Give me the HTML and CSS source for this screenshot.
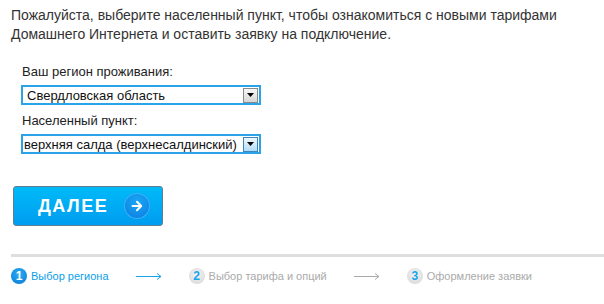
FILE: index.html
```html
<!DOCTYPE html>
<html lang="ru">
<head>
<meta charset="utf-8">
<link rel="stylesheet" href="styles.css">
</head>
<body>
<p class="intro">Пожалуйста, выберите населенный пункт, чтобы ознакомиться с новыми тарифами Домашнего Интернета и оставить заявку на подключение.</p>
<div class="form">
  <div class="label">Ваш регион проживания:</div>
  <div class="select">
    <span class="value">Свердловская область</span>
    <span class="arrow"><svg width="7" height="4" viewBox="0 0 7 4"><path d="M0 0h7L3.5 4z" fill="#000"/></svg></span>
  </div>
  <div class="label label2">Населенный пункт:</div>
  <div class="select select2">
    <span class="value">верхняя салда (верхнесалдинский)</span>
    <span class="arrow arrow-hot"><svg width="7" height="4" viewBox="0 0 7 4"><path d="M0 0h7L3.5 4z" fill="#000"/></svg></span>
  </div>
</div>
<button class="next" type="button">
  <span class="next-text">ДАЛЕЕ</span>
  <span class="next-icon"><svg width="14" height="14" viewBox="0 0 14 14"><path d="M2.5 7h8.5M7 2.8L11.2 7 7 11.2" fill="none" stroke="#fff" stroke-width="2" stroke-linecap="round" stroke-linejoin="round"/></svg></span>
</button>
<div class="rule"></div>
<div class="steps">
  <div class="step active"><span class="num">1</span><span class="stext">Выбор региона</span></div>
  <span class="sarrow active-arrow"><svg width="26" height="7" viewBox="0 0 26 7"><path d="M0 3.5h25M21 0.5l4 3-4 3" fill="none" stroke="currentColor" stroke-width="1"/></svg></span>
  <div class="step"><span class="num">2</span><span class="stext">Выбор тарифа и опций</span></div>
  <span class="sarrow"><svg width="26" height="7" viewBox="0 0 26 7"><path d="M0 3.5h25M21 0.5l4 3-4 3" fill="none" stroke="currentColor" stroke-width="1"/></svg></span>
  <div class="step"><span class="num">3</span><span class="stext">Оформление заявки</span></div>
</div>
</body>
</html>
```
FILE: styles.css
```css
html, body {
  margin: 0;
  padding: 0;
  background: #fff;
}
body {
  font-family: Arial, "Liberation Sans", sans-serif;
  color: #333;
  width: 604px;
  height: 304px;
  overflow: hidden;
}
.intro {
  margin: 6px 0 0 11px;
  font-size: 14px;
  line-height: 19px;
  width: 590px;
}
.form {
  margin: 20px 0 0 21px;
  width: 240px;
}
.label {
  font-size: 13px;
  line-height: 16px;
  color: #222;
  margin-bottom: 5px;
  padding-left: 1px;
}
.label2 {
  margin-top: 8px;
}
.select {
  box-sizing: border-box;
  height: 20px;
  border: 2px solid #2aa3e8;
  background: #fff;
  display: flex;
  align-items: center;
  justify-content: space-between;
  padding: 0 1px 0 4px;
}
.value {
  font-size: 13px;
  color: #111;
  white-space: nowrap;
}
.select2 .value {
  margin-left: -3px;
}
.arrow {
  box-sizing: border-box;
  width: 15px;
  height: 15px;
  border: 1px solid #8a8a8a;
  background: linear-gradient(#f7f7f7, #d6d6d6);
  display: flex;
  align-items: center;
  justify-content: center;
}
.arrow-hot {
  border-color: #3c86bd;
  background: linear-gradient(#eef8fe, #b2dcf6);
}
.next {
  margin: 32px 0 0 13px;
  width: 150px;
  height: 40px;
  box-sizing: border-box;
  border: 1px solid #5f7d92;
  border-radius: 3px;
  background: linear-gradient(#00baf8, #009cf0);
  display: flex;
  align-items: center;
  padding: 1px 0 0 24px;
  font-family: Arial, "Liberation Sans", sans-serif;
  cursor: pointer;
}
.next-text {
  color: #fff;
  font-weight: bold;
  font-size: 18px;
  letter-spacing: 1.5px;
}
.next-icon {
  margin-left: 16px;
  margin-top: -1px;
  width: 26px;
  height: 26px;
  border-radius: 50%;
  background: radial-gradient(circle at 50% 35%, #1aa8f5, #0a78e0);
  box-shadow: inset 0 0 0 1px #38b6f6;
  display: flex;
  align-items: center;
  justify-content: center;
}
.rule {
  margin: 28px 0 0 11px;
  height: 3px;
  background: #dedede;
}
.steps {
  margin: 11px 0 0 11px;
  display: flex;
  align-items: center;
  font-size: 11px;
}
.step {
  display: flex;
  align-items: center;
  color: #aaa;
}
.step.active {
  color: #0aa0e8;
}
.num {
  width: 16px;
  height: 16px;
  border-radius: 50%;
  background: radial-gradient(circle at 50% 40%, #f4f4f4, #d4d4d4);
  color: #14a6ec;
  font-weight: bold;
  font-size: 12px;
  display: flex;
  align-items: center;
  justify-content: center;
  margin-right: 4px;
}
.step.active .num {
  background: radial-gradient(circle at 50% 35%, #2aaef2, #0a78d8);
  color: #fff;
}
.sarrow {
  display: flex;
  color: #aaa;
  margin: 0 27px;
}
.active-arrow {
  color: #18a3ea;
}
```
